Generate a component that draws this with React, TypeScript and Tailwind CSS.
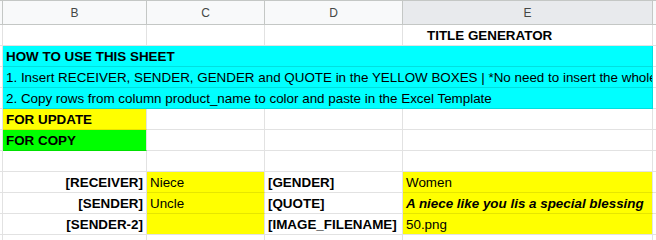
import React from 'react';

const grid = 'border-r border-b border-[#e2e2e2]';

function Header() {
    return (
        <div className="flex h-[25px] border-t border-b border-[#c4c7c5] text-[12px] text-[#444746]">
            <div className="w-[3px] shrink-0 border-r border-[#c4c7c5] bg-[#f8f9fa]" />
            <div className="w-[144px] shrink-0 flex items-center justify-center border-r border-[#c4c7c5] bg-[#f8f9fa]">B</div>
            <div className="w-[118px] shrink-0 flex items-center justify-center border-r border-[#c4c7c5] bg-[#f8f9fa]">C</div>
            <div className="w-[138px] shrink-0 flex items-center justify-center border-r border-[#c4c7c5] bg-[#f8f9fa]">D</div>
            <div className="w-[250px] shrink-0 flex items-center justify-center border-r border-[#c4c7c5] bg-[#e8eaed]">E</div>
            <div className="flex-1 bg-[#f8f9fa]" />
        </div>
    );
}

function Cell({ w, bg = '', children, className = '' }: { w: string; bg?: string; children?: React.ReactNode; className?: string }) {
    return (
        <div className={`${w} shrink-0 ${grid} ${bg} flex items-end pb-[1px] px-[3px] leading-[16px] overflow-hidden whitespace-nowrap ${className}`}>
            {children}
        </div>
    );
}

function Row({ children }: { children: React.ReactNode }) {
    return (
        <div className="flex h-[21px]">
            <div className="w-[3px] shrink-0 border-r border-b border-[#e2e2e2]" />
            {children}
            <div className="flex-1 border-b border-[#e2e2e2]" />
        </div>
    );
}

function Banner({ children, bold = false }: { children: React.ReactNode; bold?: boolean }) {
    return (
        <Row>
            <div className={`w-[650px] shrink-0 border-r border-b border-[#00e0e0] bg-[#00ffff] flex items-end pb-[1px] px-[3px] leading-[16px] overflow-hidden whitespace-nowrap ${bold ? 'font-bold' : ''}`}>
                {children}
            </div>
        </Row>
    );
}

export default function App() {
    return (
        <div className="w-[656px] h-[240px] overflow-hidden bg-white text-black text-[13.4px]" style={{ fontFamily: '"Liberation Sans", Arial, sans-serif' }}>
            <Header />
            <Row>
                <Cell w="w-[144px]" />
                <Cell w="w-[118px]" />
                <Cell w="w-[138px]" />
                <Cell w="w-[250px]" className="font-bold pl-[24px]">TITLE GENERATOR</Cell>
            </Row>
            <Banner bold>HOW TO USE THIS SHEET</Banner>
            <Banner>1. Insert RECEIVER, SENDER, GENDER and QUOTE in the YELLOW BOXES | *No need to insert the whole</Banner>
            <Banner>2. Copy rows from column product_name to color and paste in the Excel Template</Banner>
            <Row>
                <Cell w="w-[144px]" bg="bg-[#ffff00]" className="font-bold border-b-[#e6e600]">FOR UPDATE</Cell>
                <Cell w="w-[118px]" />
                <Cell w="w-[138px]" />
                <Cell w="w-[250px]" />
            </Row>
            <Row>
                <Cell w="w-[144px]" bg="bg-[#00ff00]" className="font-bold border-b-[#00e000]">FOR COPY</Cell>
                <Cell w="w-[118px]" />
                <Cell w="w-[138px]" />
                <Cell w="w-[250px]" />
            </Row>
            <Row>
                <Cell w="w-[144px]" />
                <Cell w="w-[118px]" />
                <Cell w="w-[138px]" />
                <Cell w="w-[250px]" />
            </Row>
            <Row>
                <Cell w="w-[144px]" className="font-bold justify-end">[RECEIVER]</Cell>
                <Cell w="w-[118px]" bg="bg-[#ffff00]" className="border-b-[#e6e600]">Niece</Cell>
                <Cell w="w-[138px]" className="font-bold">[GENDER]</Cell>
                <Cell w="w-[250px]" bg="bg-[#ffff00]" className="border-b-[#e6e600]">Women</Cell>
            </Row>
            <Row>
                <Cell w="w-[144px]" className="font-bold justify-end">[SENDER]</Cell>
                <Cell w="w-[118px]" bg="bg-[#ffff00]" className="border-b-[#e6e600]">Uncle</Cell>
                <Cell w="w-[138px]" className="font-bold">[QUOTE]</Cell>
                <Cell w="w-[250px]" bg="bg-[#ffff00]" className="font-bold italic border-b-[#e6e600]">A niece like you lis a special blessing</Cell>
            </Row>
            <Row>
                <Cell w="w-[144px]" className="font-bold justify-end">[SENDER-2]</Cell>
                <Cell w="w-[118px]" bg="bg-[#ffff00]" />
                <Cell w="w-[138px]" className="font-bold">[IMAGE_FILENAME]</Cell>
                <Cell w="w-[250px]" bg="bg-[#ffff00]">50.png</Cell>
            </Row>
            <Row>
                <Cell w="w-[144px]" />
                <Cell w="w-[118px]" />
                <Cell w="w-[138px]" />
                <Cell w="w-[250px]" />
            </Row>
        </div>
    );
}
